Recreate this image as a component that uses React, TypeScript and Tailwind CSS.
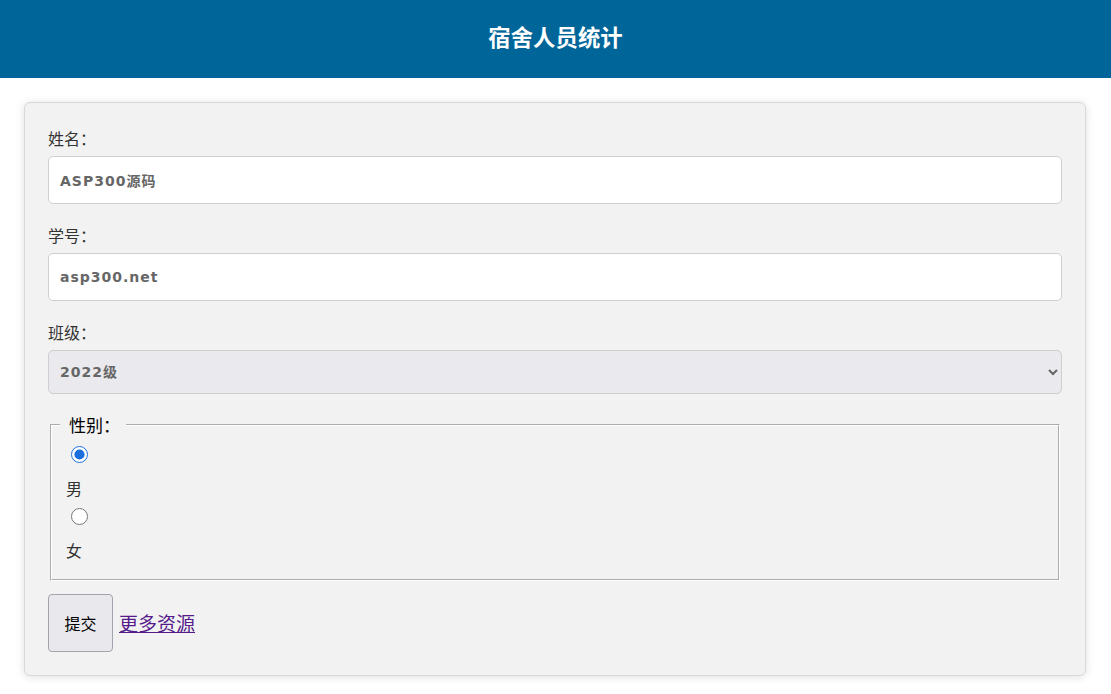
import React from "react";

export default function App() {
  return (
    <div className="min-h-screen bg-white font-['Noto_Sans_CJK_SC',sans-serif] text-[#333]">
      <header className="h-[78px] bg-[#006699] flex items-center justify-center pb-[6px]">
        <h1 className="text-white text-[22.4px] font-bold leading-none">宿舍人员统计</h1>
      </header>
      <main className="ml-[24px] mr-[25px] mt-[24px] pb-[18px]">
        <form
          className="bg-[#f2f2f2] border border-[#d9d9d9] rounded-[6px] shadow-[0_1px_8px_rgba(0,0,0,0.13)] px-[23px] pt-[23px] pb-[23px]"
          onSubmit={(e) => e.preventDefault()}
        >
          <label className="block h-[24px] leading-[24px] text-[16px]">姓名：</label>
          <input
            type="text"
            defaultValue="ASP300源码"
            className="block mt-[6px] w-full h-[48px] bg-white border border-[#cfcfcf] rounded-[5px] px-[11px] font-['DejaVu_Sans','Noto_Sans_CJK_SC',sans-serif] font-bold text-[14px] tracking-[1px] text-[#666] outline-none"
          />
          <label className="block mt-[19px] h-[24px] leading-[24px] text-[16px]">学号：</label>
          <input
            type="text"
            defaultValue="asp300.net"
            className="block mt-[6px] w-full h-[48px] bg-white border border-[#cfcfcf] rounded-[5px] px-[11px] font-['DejaVu_Sans','Noto_Sans_CJK_SC',sans-serif] font-bold text-[14px] tracking-[1px] text-[#666] outline-none"
          />
          <label className="block mt-[19px] h-[24px] leading-[24px] text-[16px]">班级：</label>
          <select
            defaultValue="2022"
            className="block mt-[6px] w-full h-[44px] bg-[#e9e9ee] border border-[#cfcfcf] rounded-[5px] pl-[7px] pr-[8px] font-['DejaVu_Sans','Noto_Sans_CJK_SC',sans-serif] font-bold text-[14px] tracking-[1px] text-[#666] outline-none"
          >
            <option value="2022">2022级</option>
            <option value="2021">2021级</option>
            <option value="2020">2020级</option>
          </select>
          <fieldset className="mt-[19px] mx-[2px] [border:2px_groove_#ffffff] pl-[14px] pr-[12px] pb-[17px]">
            <legend className="ml-[-6px] pl-[9px] pr-[6px] text-[17px] leading-[24px] text-black">性别：</legend>
            <input
              type="radio"
              name="gender"
              defaultChecked
              className="block mt-[9px] ml-[5px] w-[17px] h-[17px] accent-[#1a6fdc]"
            />
            <div className="mt-[13px] h-[24px] leading-[24px] text-[16px]">男</div>
            <input
              type="radio"
              name="gender"
              className="block mt-[8px] ml-[5px] w-[17px] h-[17px] accent-[#1a6fdc]"
            />
            <div className="mt-[13px] h-[24px] leading-[24px] text-[16px]">女</div>
          </fieldset>
          <div className="mt-[13px] flex items-center gap-[6px]">
            <button
              type="submit"
              className="w-[65px] h-[58px] bg-[#e9e9ed] border border-[#a3a3ae] rounded-[4px] text-[16px] text-black"
            >
              提交
            </button>
            <a href="#" className="text-[19px] text-[#551a8b] underline leading-[24px]">
              更多资源
            </a>
          </div>
        </form>
      </main>
    </div>
  );
}
